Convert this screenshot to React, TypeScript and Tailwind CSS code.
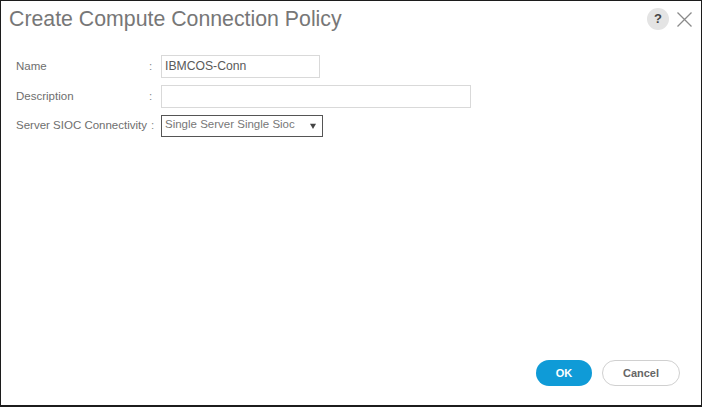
export default function App() {
  return (
    <div className="h-[407px] w-[702px] bg-white font-['Liberation_Sans',Arial,sans-serif]">
      <div className="flex h-[407px] w-[702px] flex-col border border-b-2 border-[#1c1c1c] bg-white">
        <div className="flex h-[36px] items-center justify-between pl-[8px] pr-[8px]">
          <h1 className="text-[21.3px] font-normal leading-[36px] text-[#777]">Create Compute Connection Policy</h1>
          <div className="flex items-center gap-[7px]">
            <div className="flex h-[22px] w-[22px] items-center justify-center rounded-full bg-[#e4e4e4] text-[13px] font-bold text-[#444]">?</div>
            <svg width="17" height="17" viewBox="0 0 17 17" fill="none" stroke="#8a8a8a" strokeWidth="1.3">
              <path d="M1.5 1.5 L15.5 15.5 M15.5 1.5 L1.5 15.5" />
            </svg>
          </div>
        </div>

        <div className="mt-[18px] flex flex-col gap-[7px] pl-[15px] text-[11.5px] text-[#6e6e6e]">
          <div className="flex h-[23px] items-center">
            <span className="w-[133px]">Name</span>
            <span className="w-[12px] text-[#888]">:</span>
            <div className="flex h-[23px] w-[159px] items-center border border-[#d9d9d9] pl-[3px] text-[12.2px] text-[#5a5a5a]">IBMCOS-Conn</div>
          </div>
          <div className="flex h-[23px] items-center">
            <span className="w-[133px]">Description</span>
            <span className="w-[12px] text-[#888]">:</span>
            <div className="h-[23px] w-[310px] border border-[#d9d9d9]" />
          </div>
          <div className="flex h-[22px] items-center">
            <span className="w-[135px] whitespace-nowrap">Server SIOC Connectivity</span>
            <span className="w-[10px] text-[#888]">:</span>
            <div className="flex h-[22px] w-[162px] items-start justify-between border border-[#555] pl-[3px] pr-[6px] text-[11.5px] leading-[16px] text-[#777]">
              <span className="whitespace-nowrap">Single Server Single Sioc</span>
              <svg className="mt-[7px]" width="6" height="6" viewBox="0 0 7 7" fill="#444">
                <path d="M0 1 H7 L3.5 7 Z" />
              </svg>
            </div>
          </div>
        </div>

        <div className="mt-auto flex justify-end gap-[10px] pb-[19px] pr-[21px]">
          <button className="h-[26px] w-[56px] rounded-full bg-[#0f9bd7] text-[11px] font-bold text-white">OK</button>
          <button className="h-[26px] w-[78px] rounded-full border border-[#d0d0d0] bg-white text-[11px] font-bold text-[#666]">Cancel</button>
        </div>
      </div>
    </div>
  );
}
